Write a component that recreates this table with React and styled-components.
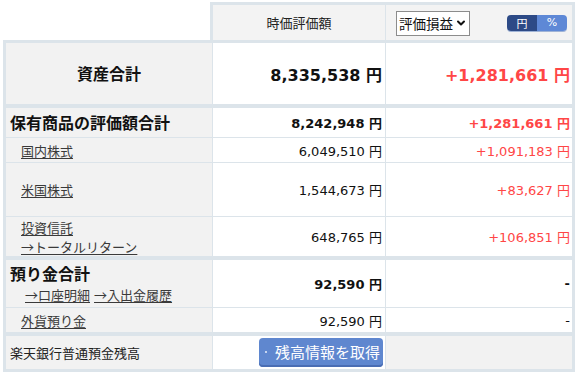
import styled, { createGlobalStyle } from "styled-components";
import { ChevronDown } from "lucide-react";

const LINE = "#dce4ea";
const RED = "#ff4646";

const GlobalStyle = createGlobalStyle`
  html, body {
    margin: 0;
    padding: 0;
    background: #fff;
  }
  body {
    font-family: "DejaVu Sans", "Noto Sans CJK JP", sans-serif;
    color: #111;
  }
`;

const Page = styled.div`
  padding: 2px 0 0 3px;
  width: 577px;
  box-sizing: border-box;
`;

const Header = styled.div`
  margin-left: 207px;
  width: 365px;
  box-sizing: border-box;
  background: ${LINE};
  padding: 3px 3px 0 3px;
  display: grid;
  grid-template-columns: 172px 186px;
  column-gap: 1px;
  height: 38px;
`;

const HeadCell = styled.div`
  background: #f3f3f3;
  display: flex;
  align-items: center;
  justify-content: ${(p) => p.$justify || "center"};
  font-family: "Noto Sans CJK JP", sans-serif;
  font-size: 13px;
  color: #222;
`;

const SelectBox = styled.div`
  margin-left: 10px;
  margin-top: 1px;
  width: 74px;
  height: 25px;
  box-sizing: border-box;
  border: 1px solid #8c8c8c;
  background: #fff;
  display: flex;
  align-items: center;
  padding-left: 2px;
  gap: 2px;
  white-space: nowrap;
  font-family: "Noto Sans CJK JP", sans-serif;
  font-size: 13.5px;
  color: #111;
`;

const Toggle = styled.div`
  margin-left: auto;
  margin-right: 5px;
  display: flex;
  height: 16px;
  border-radius: 4px;
  overflow: hidden;
  box-shadow: 0 1px 0 #9fb3d6;
`;

const ToggleItem = styled.div`
  width: 30px;
  background: ${(p) => (p.$active ? "#2d4a86" : "#5e88d6")};
  color: #fff;
  font-size: 11px;
  display: flex;
  align-items: center;
  justify-content: center;
  font-family: "DejaVu Sans", "Noto Sans CJK JP", sans-serif;
`;

const Table = styled.div`
  width: 572px;
  box-sizing: border-box;
  background: ${LINE};
  padding: 3px;
  display: flex;
  flex-direction: column;
`;

const Row = styled.div`
  display: grid;
  grid-template-columns: 206px 172px 186px;
  column-gap: 1px;
  height: ${(p) => p.$h}px;
  margin-top: ${(p) => p.$gap || 0}px;
`;

const Label = styled.div`
  background: #f2f2f2;
  display: flex;
  flex-direction: column;
  justify-content: center;
  align-items: ${(p) => (p.$center ? "center" : "flex-start")};
  padding-left: ${(p) => (p.$center ? 0 : p.$indent || 7)}px;
  font-family: "Noto Sans CJK JP", sans-serif;
`;

const Title = styled.span`
  font-size: 16px;
  font-weight: 700;
  line-height: ${(p) => p.$lh || 22}px;
  color: #111;
  margin-top: -2px;
`;

const Plain = styled.span`
  font-size: 13px;
  color: #222;
`;

const SubLink = styled.a`
  font-size: 13px;
  line-height: 19px;
  color: #3a3a3a;
  text-decoration: underline;
  text-underline-offset: 2px;
  margin-right: ${(p) => p.$mr || 0}px;
  cursor: pointer;
`;

const Links = styled.div`
  display: flex;
  padding-left: 15px;
  line-height: 20px;
`;

const Value = styled.div`
  background: ${(p) => (p.$gray ? "#f2f2f2" : "#fff")};
  display: flex;
  align-items: center;
  justify-content: flex-end;
  padding-right: ${(p) => p.$pr || 3}px;
  font-size: ${(p) => p.$size || 13}px;
  font-weight: ${(p) => (p.$bold ? 700 : 400)};
  color: ${(p) => (p.$red ? RED : "#111")};
  white-space: pre;
`;

const FetchButton = styled.button`
  width: 124px;
  height: 29px;
  border: none;
  border-radius: 4px;
  background: #5f87cf;
  box-shadow: inset 0 -2px 0 #4a6db3;
  color: #fff;
  font-family: "Noto Sans CJK JP", sans-serif;
  font-size: 15px;
  display: flex;
  align-items: center;
  padding: 0 0 2px 6px;
  gap: 8px;
  cursor: pointer;
`;

const Dot = styled.span`
  width: 2px;
  height: 2px;
  background: #e8eefa;
  border-radius: 1px;
`;

const sub = [
  { name: "国内株式", value: "6,049,510 円", gain: "+1,091,183 円", h: 24 },
  { name: "米国株式", value: "1,544,673 円", gain: "+83,627 円", h: 53 },
];

export default function App() {
  return (
    <>
      <GlobalStyle />
      <Page>
        <Header>
          <HeadCell>時価評価額</HeadCell>
          <HeadCell $justify="flex-start">
            <SelectBox>
              評価損益
              <ChevronDown size={12} strokeWidth={4} color="#111" />
            </SelectBox>
            <Toggle>
              <ToggleItem $active>円</ToggleItem>
              <ToggleItem>%</ToggleItem>
            </Toggle>
          </HeadCell>
        </Header>
        <Table>
          <Row $h={61}>
            <Label $center>
              <Title>資産合計</Title>
            </Label>
            <Value $bold $size={16}>8,335,538 円</Value>
            <Value $bold $red $size={16} $pr={2}>+1,281,661 円</Value>
          </Row>

          <Row $h={29} $gap={4}>
            <Label $indent={4}>
              <Title>保有商品の評価額合計</Title>
            </Label>
            <Value $bold>8,242,948 円</Value>
            <Value $bold $red $pr={2}>+1,281,661 円</Value>
          </Row>
          {sub.map((s) => (
            <Row key={s.name} $h={s.h} $gap={1}>
              <Label $indent={15}>
                <SubLink>{s.name}</SubLink>
              </Label>
              <Value>{s.value}</Value>
              <Value $red $pr={2}>{s.gain}</Value>
            </Row>
          ))}
          <Row $h={39} $gap={1}>
            <Label $indent={15}>
              <SubLink>投資信託</SubLink>
              <SubLink>→トータルリターン</SubLink>
            </Label>
            <Value>648,765 円</Value>
            <Value $red $pr={2}>+106,851 円</Value>
          </Row>

          <Row $h={47} $gap={4}>
            <Label $indent={4}>
              <Title $lh={24}>預り金合計</Title>
              <Links>
                <SubLink $mr={4}>→口座明細</SubLink>
                <SubLink>→入出金履歴</SubLink>
              </Links>
            </Label>
            <Value $bold>92,590 円</Value>
            <Value $bold $pr={2}>-</Value>
          </Row>
          <Row $h={24} $gap={1}>
            <Label $indent={15}>
              <SubLink>外貨預り金</SubLink>
            </Label>
            <Value>92,590 円</Value>
            <Value $pr={2}>-</Value>
          </Row>

          <Row $h={33} $gap={4}>
            <Label $indent={4}>
              <Plain>楽天銀行普通預金残高</Plain>
            </Label>
            <Value $pr={2}>
              <FetchButton>
                <Dot />
                残高情報を取得
              </FetchButton>
            </Value>
            <Value $gray />
          </Row>
        </Table>
      </Page>
    </>
  );
}
